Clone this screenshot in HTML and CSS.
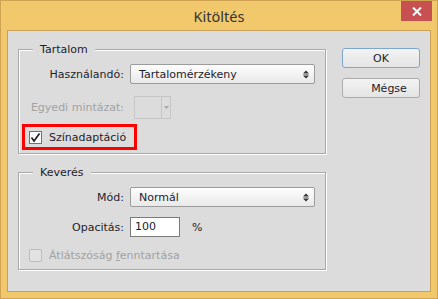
FILE: index.html
```html
<!DOCTYPE html>
<html lang="hu">
<head>
<meta charset="utf-8">
<title>Kitöltés</title>
<link rel="stylesheet" href="styles.css">
</head>
<body>
<div class="window">
  <div class="titlebar">
    <span class="title">Kitöltés</span>
    <button class="close" aria-label="Bezárás">
      <svg width="10" height="9" viewBox="0 0 10 9"><path d="M1 0.5 L9 8.5 M9 0.5 L1 8.5" stroke="#fff" stroke-width="2"/></svg>
    </button>
  </div>
  <div class="client">
    <div class="groups">
      <fieldset class="group group-content">
        <legend>Tartalom</legend>
        <div class="form">
          <label class="lbl">Használandó:</label>
          <div class="select"><span>Tartalomérzékeny</span>
            <svg width="6" height="9" viewBox="0 0 6 9"><path d="M0 3.5 L3 0.5 L6 3.5 Z M0 5.5 L3 8.5 L6 5.5 Z" fill="#333"/><path d="M0.5 4.5 H5.5" stroke="#999" stroke-width="1"/></svg>
          </div>
          <label class="lbl disabled">Egyedi mintázat:</label>
          <div class="swatch"><span class="swatch-box"></span><span class="swatch-arrow"><svg width="5" height="3" viewBox="0 0 5 3"><path d="M0 0 H5 L2.5 3 Z" fill="#a8a8a8"/></svg></span></div>
        </div>
        <div class="check-row highlight">
          <span class="checkbox"><svg width="11" height="11" viewBox="0 0 11 11"><path d="M1.5 5.5 L4 9 L9.5 1.5" fill="none" stroke="#222" stroke-width="1.7"/></svg></span>
          <span class="check-label">Színadaptáció</span>
        </div>
      </fieldset>
      <fieldset class="group group-blend">
        <legend>Keverés</legend>
        <div class="form form-blend">
          <label class="lbl">Mód:</label>
          <div class="select"><span>Normál</span>
            <svg width="6" height="9" viewBox="0 0 6 9"><path d="M0 3.5 L3 0.5 L6 3.5 Z M0 5.5 L3 8.5 L6 5.5 Z" fill="#333"/><path d="M0.5 4.5 H5.5" stroke="#999" stroke-width="1"/></svg>
          </div>
          <label class="lbl">Opacitás:</label>
          <div class="opacity"><span class="input">100</span><span class="unit">%</span></div>
        </div>
        <div class="check-row plain">
          <span class="checkbox disabled"></span>
          <span class="check-label disabled">Átlátszóság <u>f</u>enntartása</span>
        </div>
      </fieldset>
    </div>
    <div class="buttons">
      <button class="btn default">OK</button>
      <button class="btn cancel">Mégse</button>
    </div>
  </div>
</div>
</body>
</html>
```
FILE: styles.css
```css
html, body {
  margin: 0;
  padding: 0;
  background: #f1c96c;
}
body {
  font-family: "DejaVu Sans", sans-serif;
  font-size: 11px;
  color: #1c1c2c;
}
.window {
  width: 438px;
  height: 299px;
  box-sizing: border-box;
  border: 1px solid #cfa352;
  background: #f1c96c;
  display: flex;
  flex-direction: column;
}
.titlebar {
  height: 29px;
  display: grid;
  grid-template-columns: 1fr auto 1fr;
  align-items: center;
}
.title {
  grid-column: 2;
  font-family: "Noto Sans", sans-serif;
  font-size: 14.5px;
  color: #333;
  line-height: 20px;
}
.close {
  grid-column: 3;
  justify-self: end;
  align-self: start;
  width: 31px;
  height: 20px;
  margin-right: 5px;
  padding: 0;
  border: 0;
  background: #c75050;
  display: flex;
  align-items: center;
  justify-content: center;
}
.client {
  flex: 1;
  margin: 0 6px 6px;
  border: 1px solid #c9a257;
  background: #dcdcdc;
  display: flex;
  gap: 16px;
  padding: 11px 10px 0 10px;
}
.groups {
  width: 308px;
  display: flex;
  flex-direction: column;
}
.group {
  margin: 0;
  min-width: 0;
  box-sizing: border-box;
  width: 308px;
  border: 1px solid #a9a9a9;
  box-shadow: 1px 1px 0 #fff, inset 1px 1px 0 #fff;
  padding: 7px 0 3px 0;
}
.group-blend {
  margin-top: 11px;
  padding-bottom: 7px;
}
legend {
  margin-left: 14px;
  padding: 0 7px;
  line-height: 15px;
  background: #dcdcdc;
}
.form {
  display: grid;
  grid-template-columns: 105px 1fr;
  column-gap: 6px;
  row-gap: 12px;
  align-items: center;
}
.form-blend {
  row-gap: 10px;
}
.lbl {
  text-align: right;
}
.disabled {
  color: #a2a2a2;
}
.select {
  width: 185px;
  height: 20px;
  box-sizing: border-box;
  border: 1px solid #9c9c9c;
  border-radius: 2px;
  background: linear-gradient(#fdfdfd, #e9e9e9);
  display: flex;
  align-items: center;
  justify-content: space-between;
  padding: 0 5px 0 8px;
}
.swatch {
  display: flex;
  height: 23px;
  margin-left: 4px;
}
.swatch-box {
  width: 28px;
  box-sizing: border-box;
  border: 1px solid #c6c6c6;
}
.swatch-arrow {
  width: 9px;
  box-sizing: border-box;
  border: 1px solid #c6c6c6;
  border-left: 0;
  display: flex;
  align-items: center;
  justify-content: center;
}
.opacity {
  display: flex;
  align-items: center;
  gap: 12px;
}
.input {
  width: 50px;
  height: 20px;
  box-sizing: border-box;
  border: 1px solid #7a7a7a;
  background: #fff;
  padding-left: 4px;
  line-height: 18px;
}
.check-row {
  display: inline-flex;
  align-items: center;
  gap: 7px;
  align-self: flex-start;
}
.highlight {
  margin: 5px 0 0 3px;
  border: 3px solid #f00;
  height: 20px;
  padding: 0 8px 0 4px;
}
.plain {
  margin: 12px 0 0 10px;
  height: 13px;
}
.group .check-row {
  display: flex;
  width: max-content;
}
.checkbox {
  width: 13px;
  height: 13px;
  box-sizing: border-box;
  border: 1px solid #707070;
  background: #fff;
  display: flex;
  align-items: center;
  justify-content: center;
}
.checkbox.disabled {
  border-color: #bdbdbd;
  border-radius: 2px;
  background: #e2e2e2;
}
.buttons {
  display: flex;
  flex-direction: column;
  gap: 10px;
  padding-top: 6px;
}
.btn {
  width: 78px;
  height: 20px;
  box-sizing: border-box;
  border: 1px solid #acacac;
  border-radius: 3px;
  background: linear-gradient(#f3f3f3, #e4e4e4);
  font-family: "DejaVu Sans", sans-serif;
  font-size: 11px;
  color: #1c1c2c;
  padding: 0;
}
.default {
  border-color: #7fa6d3;
}
.cancel {
  padding-left: 16px;
}
```
